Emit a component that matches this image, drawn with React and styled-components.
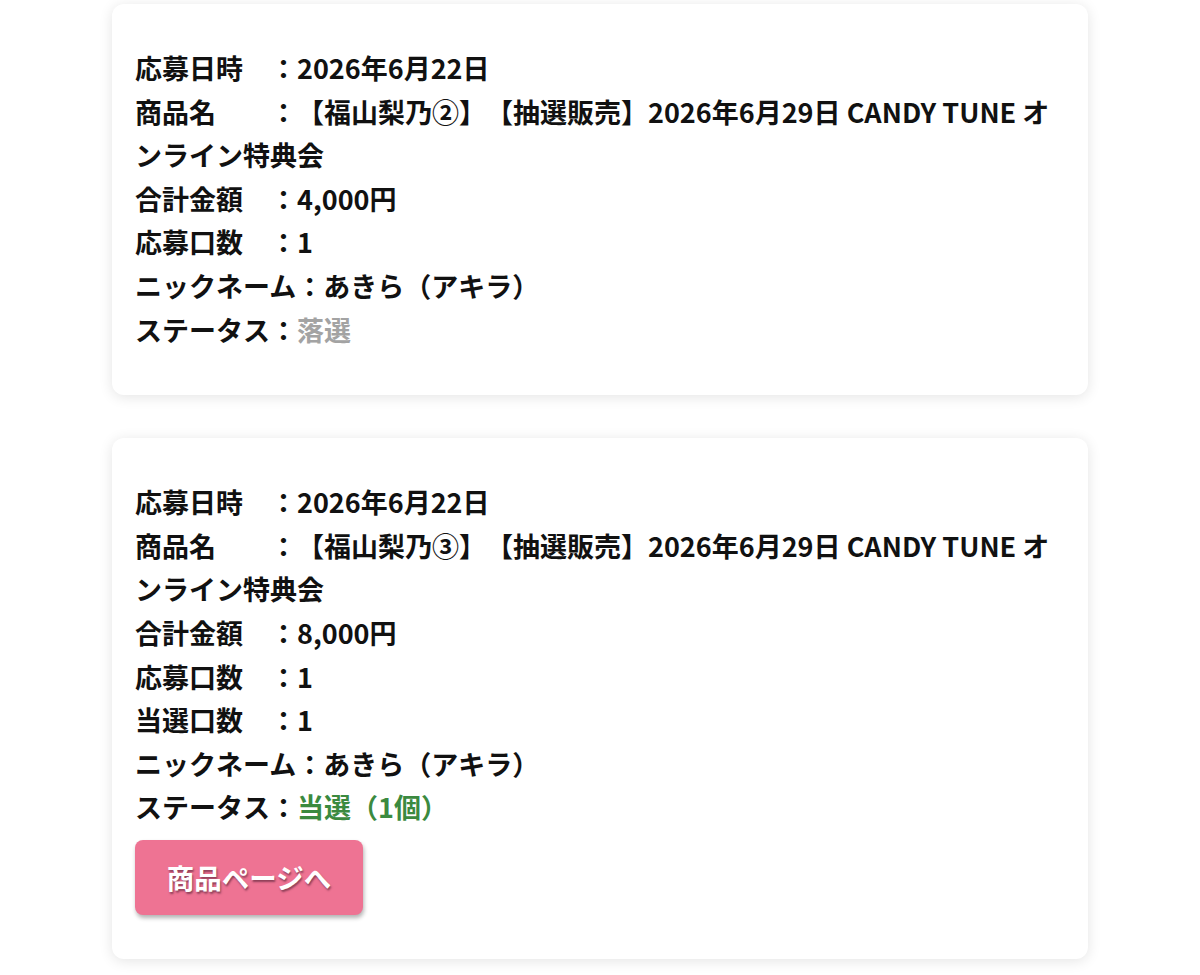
import React from 'react';
import styled, { createGlobalStyle } from 'styled-components';

const GlobalStyle = createGlobalStyle`
  html, body {
    margin: 0;
    padding: 0;
    background: #ffffff;
  }
  body {
    font-family: "Noto Sans CJK JP", "Noto Sans", sans-serif;
    color: #111111;
    text-spacing-trim: space-all;
  }
`

const Page = styled.div`
  display: flex;
  flex-direction: column;
  align-items: center;
  gap: 43px;
  padding: 4px 0 20px;
`

const Card = styled.div`
  width: 976px;
  box-sizing: border-box;
  background: #ffffff;
  border-radius: 12px;
  box-shadow: 0 2px 14px rgba(0, 0, 0, 0.11);
  padding: 42px 23px 44px;
`

const Line = styled.p`
  margin: 0;
  font-size: 27px;
  font-weight: 700;
  line-height: 43.6px;
  text-spacing-trim: space-all;
`

const Status = styled.span`
  color: ${props => props.won ? '#3b8a3f' : '#a3a3a3'};
`

const GoButton = styled.button`
  margin-top: 11px;
  width: 228px;
  height: 75px;
  border: none;
  border-radius: 8px;
  background: #ee7393;
  color: #ffffff;
  font-family: "Noto Sans CJK JP", "Noto Sans", sans-serif;
  font-size: 27.5px;
  font-weight: 700;
  text-shadow: 1px 2px 2px rgba(80, 30, 50, 0.6);
  box-shadow: 1px 3px 4px rgba(0, 0, 0, 0.3);
  cursor: pointer;
`

const entries = [
  {
    date: '2026年6月22日',
    item: '【福山梨乃②】【抽選販売】2026年6月29日 CANDY TUNE オンライン特典会',
    total: '4,000円',
    count: '1',
    nickname: 'あきら（アキラ）',
    status: '落選',
    won: false,
  },
  {
    date: '2026年6月22日',
    item: '【福山梨乃③】【抽選販売】2026年6月29日 CANDY TUNE オンライン特典会',
    total: '8,000円',
    count: '1',
    winCount: '1',
    nickname: 'あきら（アキラ）',
    status: '当選（1個）',
    won: true,
  },
]

const EntryCard = ({ e }) => (
  <Card>
    <Line>応募日時　：{e.date}</Line>
    <Line>商品名　　：{e.item}</Line>
    <Line>合計金額　：{e.total}</Line>
    <Line>応募口数　：{e.count}</Line>
    {e.winCount && <Line>当選口数　：{e.winCount}</Line>}
    <Line>ニックネーム：{e.nickname}</Line>
    <Line>ステータス：<Status won={e.won}>{e.status}</Status></Line>
    {e.won && <GoButton>商品ページへ</GoButton>}
  </Card>
);

const App = () => (
  <>
    <GlobalStyle />
    <Page>
      {entries.map((e, i) => <EntryCard key={i} e={e} />)}
    </Page>
  </>
);

export default App;
